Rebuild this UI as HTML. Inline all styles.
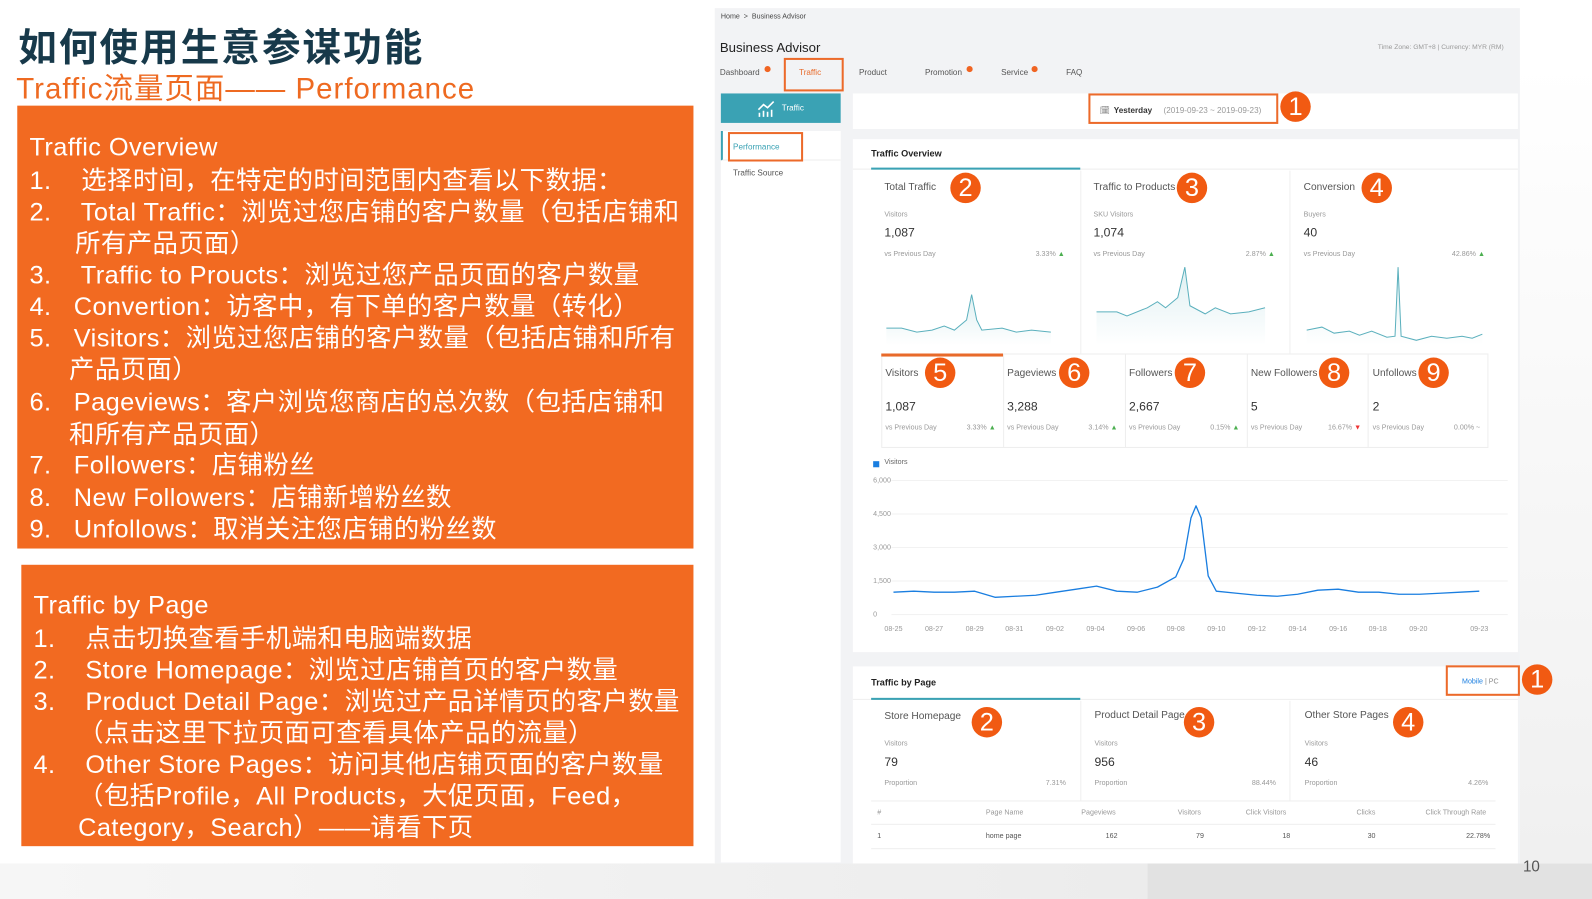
<!DOCTYPE html>
<html><head><meta charset="utf-8"><style>
*{margin:0;padding:0;box-sizing:border-box}
html,body{width:1592px;height:899px;overflow:hidden;background:#fff}
#w{position:absolute;left:0;top:0;width:1568px;height:885px;transform:scale(1.0153,1.0158);transform-origin:0 0;font-family:"Liberation Sans","Noto Sans CJK SC",sans-serif}
.a{position:absolute;white-space:nowrap}
.ob{position:absolute;background:#F26A21;color:#fff}
.ob div{position:absolute;white-space:nowrap;font-size:25px;line-height:28px;letter-spacing:0.4px}
.b{position:absolute;width:30px;height:30px;border-radius:50%;background:#F15A12;color:#fff;font-size:25px;line-height:30px;text-align:center;font-family:"Liberation Sans",sans-serif}
.rb{position:absolute;border:2px solid #EC6A2A}
.card{position:absolute;background:#fff}
.g{color:#999;font-size:7px}
.t{color:#555;font-size:10px}
.n{color:#333;font-size:12px}
</style></head><body><div id="w">
<div class="a" style="left:0;top:850px;width:1130px;height:35px;background:linear-gradient(90deg,#f6f6f6,#ececec)"></div>
<div class="a" style="left:1130px;top:850px;width:438px;height:35px;background:#e2e2e2"></div>
<div class="a" style="left:1497px;top:60px;width:71px;height:790px;background:linear-gradient(180deg,#fff,#f0f0f0)"></div>
<div class="a" style="left:18px;top:16px;font-size:38px;color:#17394a;font-family:'Noto Sans CJK SC',sans-serif;font-weight:bold;letter-spacing:2px">如何使用生意参谋功能</div>
<div class="a" style="left:16px;top:64px;font-size:29px;color:#EE6A21;letter-spacing:1px;font-family:'Liberation Sans','Noto Sans CJK SC',sans-serif">Traffic流量页面—— Performance</div>

<div class="ob" style="left:17px;top:104px;width:666px;height:436px">
<div style="left:12px;top:27px">Traffic Overview</div>
<div style="left:12px;top:60px">1.&nbsp;&nbsp;&nbsp; 选择时间，在特定的时间范围内查看以下数据：</div>
<div style="left:12px;top:91px">2.&nbsp;&nbsp;&nbsp; Total Traffic：浏览过您店铺的客户数量（包括店铺和</div>
<div style="left:57px;top:122px">所有产品页面）</div>
<div style="left:12px;top:153px">3.&nbsp;&nbsp;&nbsp; Traffic to Proucts：浏览过您产品页面的客户数量</div>
<div style="left:12px;top:184px">4.&nbsp;&nbsp; Convertion：访客中，有下单的客户数量（转化）</div>
<div style="left:12px;top:215px">5.&nbsp;&nbsp; Visitors：浏览过您店铺的客户数量（包括店铺和所有</div>
<div style="left:51px;top:246px">产品页面）</div>
<div style="left:12px;top:278px">6.&nbsp;&nbsp; Pageviews：客户浏览您商店的总次数（包括店铺和</div>
<div style="left:51px;top:310px">和所有产品页面）</div>
<div style="left:12px;top:340px">7.&nbsp;&nbsp; Followers：店铺粉丝</div>
<div style="left:12px;top:372px">8.&nbsp;&nbsp; New Followers：店铺新增粉丝数</div>
<div style="left:12px;top:403px">9.&nbsp;&nbsp; Unfollows：取消关注您店铺的粉丝数</div>
</div>

<div class="ob" style="left:21px;top:556px;width:662px;height:277px">
<div style="left:12px;top:26px">Traffic by Page</div>
<div style="left:12px;top:59px">1.&nbsp;&nbsp;&nbsp; 点击切换查看手机端和电脑端数据</div>
<div style="left:12px;top:90px">2.&nbsp;&nbsp;&nbsp; Store Homepage：浏览过店铺首页的客户数量</div>
<div style="left:12px;top:121px">3.&nbsp;&nbsp;&nbsp; Product Detail Page：浏览过产品详情页的客户数量</div>
<div style="left:56px;top:152px">（点击这里下拉页面可查看具体产品的流量）</div>
<div style="left:12px;top:183px">4.&nbsp;&nbsp;&nbsp; Other Store Pages：访问其他店铺页面的客户数量</div>
<div style="left:56px;top:214px">（包括Profile，All Products，大促页面，Feed，</div>
<div style="left:56px;top:245px">Category，Search）——请看下页</div>
</div>

<!-- right screenshot -->
<div class="a" style="left:704px;top:8px;width:793px;height:842px;background:#f2f3f5"></div>
<div class="a" style="left:710px;top:13px;font-size:7px;color:#444">Home &nbsp;&gt;&nbsp; Business Advisor</div>
<div class="a" style="left:709px;top:39px;font-size:13px;color:#222">Business Advisor</div>
<div class="a" style="left:1357px;top:43px;font-size:6.6px;color:#999">Time Zone: GMT+8 | Currency: MYR (RM)</div>
<div class="a t" style="left:709px;top:67px;font-size:8px">Dashboard</div>
<div class="a" style="left:753px;top:65px;width:6px;height:6px;border-radius:50%;background:#F06422"></div>
<div class="a" style="left:787px;top:67px;font-size:8px;color:#E86A2A">Traffic</div>
<div class="rb" style="left:772px;top:57px;width:59px;height:33px"></div>
<div class="a t" style="left:846px;top:67px;font-size:8px">Product</div>
<div class="a t" style="left:911px;top:67px;font-size:8px">Promotion</div>
<div class="a" style="left:952px;top:65px;width:6px;height:6px;border-radius:50%;background:#F06422"></div>
<div class="a t" style="left:986px;top:67px;font-size:8px">Service</div>
<div class="a" style="left:1016px;top:65px;width:6px;height:6px;border-radius:50%;background:#F06422"></div>
<div class="a t" style="left:1050px;top:67px;font-size:8px">FAQ</div>

<div class="a" style="left:710px;top:92px;width:118px;height:29px;background:#3aa2b4"></div>
<svg class="a" style="left:745px;top:98px" width="20" height="18"><path d="M2 10l5-5 4 3 6-6M3 17v-4M7 17v-6M11 17v-5M15 17v-7" stroke="#fff" stroke-width="1.6" fill="none"/></svg>
<div class="a" style="left:770px;top:102px;font-size:8px;color:#fff">Traffic</div>
<div class="a" style="left:710px;top:129px;width:118px;height:720px;background:#fff"></div>
<div class="a" style="left:710px;top:129px;width:118px;height:29px;background:#fff;border-left:2px solid #3aa2b4;border-bottom:1px solid #eee"></div>
<div class="a" style="left:722px;top:140px;font-size:8px;color:#3aa2b4">Performance</div>
<div class="rb" style="left:717px;top:130px;width:74px;height:29px"></div>
<div class="a" style="left:722px;top:166px;font-size:8px;color:#555">Traffic Source</div>

<div class="card" style="left:840px;top:92px;width:655px;height:35px"></div>
<div class="a" style="left:1083px;top:104px;font-size:8px;color:#888">🗓</div>
<div class="a" style="left:1097px;top:104px;font-size:8px;color:#333;font-weight:bold">Yesterday</div>
<div class="a" style="left:1146px;top:104px;font-size:8px;color:#999">(2019-09-23 ~ 2019-09-23)</div>
<div class="rb" style="left:1072px;top:92px;width:187px;height:30px"></div>
<div class="b" style="left:1261px;top:90px">1</div>

<div class="card" style="left:840px;top:137px;width:655px;height:505px"></div>
<div class="a" style="left:858px;top:146px;font-size:9px;color:#222;font-weight:bold">Traffic Overview</div>
<div class="a" style="left:840px;top:166px;width:655px;height:1px;background:#eee"></div>
<div class="a" style="left:858px;top:165px;width:206px;height:2px;background:#3aa2b4"></div>
<div class="a" style="left:1064px;top:168px;width:1px;height:180px;background:#f0f0f0"></div>
<div class="a" style="left:1270px;top:168px;width:1px;height:180px;background:#f0f0f0"></div>

<div class="a t" style="left:871px;top:179px">Total Traffic</div><div class="b" style="left:936px;top:170px">2</div>
<div class="a g" style="left:871px;top:208px">Visitors</div><div class="a n" style="left:871px;top:222px">1,087</div>
<div class="a g" style="left:871px;top:247px">vs Previous Day</div><div class="a g" style="left:1020px;top:247px">3.33% <span style="color:#4caf50">▲</span></div>
<div class="a t" style="left:1077px;top:179px">Traffic to Products</div><div class="b" style="left:1159px;top:170px">3</div>
<div class="a g" style="left:1077px;top:208px">SKU Visitors</div><div class="a n" style="left:1077px;top:222px">1,074</div>
<div class="a g" style="left:1077px;top:247px">vs Previous Day</div><div class="a g" style="left:1227px;top:247px">2.87% <span style="color:#4caf50">▲</span></div>
<div class="a t" style="left:1284px;top:179px">Conversion</div><div class="b" style="left:1341px;top:170px">4</div>
<div class="a g" style="left:1284px;top:208px">Buyers</div><div class="a n" style="left:1284px;top:222px">40</div>
<div class="a g" style="left:1284px;top:247px">vs Previous Day</div><div class="a g" style="left:1430px;top:247px">42.86% <span style="color:#4caf50">▲</span></div>

<svg class="a" style="left:840px;top:255px" width="655" height="90">
<defs><linearGradient id="fg" x1="0" y1="0" x2="0" y2="1"><stop offset="0" stop-color="#dff0f2"/><stop offset="1" stop-color="#fff"/></linearGradient></defs>
<path d="M33 68 l15 0 15 4 15-2 12-4 10 4 12-10 5 -25 5 25 5 10 20-2 14 4 15-2 19 2 V85 H33Z" fill="url(#fg)"/>
<path d="M33 68 l15 0 15 4 15-2 12-4 10 4 12-10 5 -25 5 25 5 10 20-2 14 4 15-2 19 2" stroke="#5bb0bd" fill="none"/>
<path d="M240 52 l20 0 10 4 20-8 10-6 8 6 12-10 7 -30 5 38 15 8 10-6 15 6 18-2 16-4 V85 H240Z" fill="url(#fg)"/>
<path d="M240 52 l20 0 10 4 20-8 10-6 8 6 12-10 7 -30 5 38 15 8 10-6 15 6 18-2 16-4" stroke="#5bb0bd" fill="none"/>
<path d="M447 70 l15-3 12 6 15-2 10 4 12-4 15 6 8-1 3 -68 3 68 15 4 15-4 15 2 15-2 10 2 10-4 V85 H447Z" fill="url(#fg)"/>
<path d="M447 70 l15-3 12 6 15-2 10 4 12-4 15 6 8-1 3 -68 3 68 15 4 15-4 15 2 15-2 10 2 10-4" stroke="#5bb0bd" fill="none"/>
</svg>

<div class="a" style="left:868px;top:348px;width:598px;height:93px;border:1px solid #eee"></div>
<div class="a" style="left:868px;top:348px;width:120px;height:3px;background:#E86A2A"></div>
<div class="a" style="left:988px;top:348px;width:1px;height:93px;background:#eee"></div>
<div class="a" style="left:1108px;top:348px;width:1px;height:93px;background:#eee"></div>
<div class="a" style="left:1228px;top:348px;width:1px;height:93px;background:#eee"></div>
<div class="a" style="left:1347px;top:348px;width:1px;height:93px;background:#eee"></div>

<div class="a t" style="left:872px;top:362px">Visitors</div><div class="b" style="left:911px;top:352px">5</div>
<div class="a n" style="left:872px;top:393px">1,087</div><div class="a g" style="left:872px;top:418px">vs Previous Day</div><div class="a g" style="left:952px;top:418px">3.33% <span style="color:#4caf50">▲</span></div>
<div class="a t" style="left:992px;top:362px">Pageviews</div><div class="b" style="left:1043px;top:352px">6</div>
<div class="a n" style="left:992px;top:393px">3,288</div><div class="a g" style="left:992px;top:418px">vs Previous Day</div><div class="a g" style="left:1072px;top:418px">3.14% <span style="color:#4caf50">▲</span></div>
<div class="a t" style="left:1112px;top:362px">Followers</div><div class="b" style="left:1157px;top:352px">7</div>
<div class="a n" style="left:1112px;top:393px">2,667</div><div class="a g" style="left:1112px;top:418px">vs Previous Day</div><div class="a g" style="left:1192px;top:418px">0.15% <span style="color:#4caf50">▲</span></div>
<div class="a t" style="left:1232px;top:362px">New Followers</div><div class="b" style="left:1299px;top:352px">8</div>
<div class="a n" style="left:1232px;top:393px">5</div><div class="a g" style="left:1232px;top:418px">vs Previous Day</div><div class="a g" style="left:1308px;top:418px">16.67% <span style="color:#e33">▼</span></div>
<div class="a t" style="left:1352px;top:362px">Unfollows</div><div class="b" style="left:1397px;top:352px">9</div>
<div class="a n" style="left:1352px;top:393px">2</div><div class="a g" style="left:1352px;top:418px">vs Previous Day</div><div class="a g" style="left:1432px;top:418px">0.00% ~</div>

<div class="a" style="left:860px;top:454px;width:6px;height:6px;background:#1a7ee0"></div>
<div class="a g" style="left:871px;top:452px;color:#666">Visitors</div>
<svg class="a" style="left:840px;top:460px" width="655" height="170" font-family="Liberation Sans" font-size="7" fill="#999">
<text x="20" y="15">6,000</text><text x="20" y="48">4,500</text><text x="20" y="81">3,000</text><text x="20" y="114">1,500</text><text x="20" y="147">0</text>
<g stroke="#f2f2f2"><line x1="38" y1="13" x2="645" y2="13"/><line x1="38" y1="46" x2="645" y2="46"/><line x1="38" y1="79" x2="645" y2="79"/><line x1="38" y1="112" x2="645" y2="112"/><line x1="38" y1="145" x2="645" y2="145"/></g>
<path d="M40 123 L60 122 L80 123 L100 123 L120 122 L140 128 L160 127 L180 126 L200 123 L220 120 L240 117 L260 122 L280 123 L300 118 L318 108 L326 90 L333 50 L338 38 L343 50 L350 107 L358 122 L378 124 L398 126 L418 127 L438 125 L458 121 L478 120 L498 123 L518 123 L538 125 L558 125 L578 124 L598 123 L617 122" stroke="#1a7ee0" stroke-width="1.3" fill="none" stroke-linejoin="round"/>
<g text-anchor="middle"><text x="40" y="161">08-25</text><text x="80" y="161">08-27</text><text x="120" y="161">08-29</text><text x="159" y="161">08-31</text><text x="199" y="161">09-02</text><text x="239" y="161">09-04</text><text x="279" y="161">09-06</text><text x="318" y="161">09-08</text><text x="358" y="161">09-10</text><text x="398" y="161">09-12</text><text x="438" y="161">09-14</text><text x="478" y="161">09-16</text><text x="517" y="161">09-18</text><text x="557" y="161">09-20</text><text x="617" y="161">09-23</text></g>
</svg>

<div class="card" style="left:840px;top:656px;width:655px;height:194px"></div>
<div class="a" style="left:858px;top:667px;font-size:9px;color:#222;font-weight:bold">Traffic by Page</div>
<div class="a" style="left:840px;top:688px;width:655px;height:1px;background:#eee"></div>
<div class="a" style="left:858px;top:687px;width:206px;height:2px;background:#3aa2b4"></div>
<div class="a" style="left:1440px;top:668px;font-size:7px;color:#1a7ee0">Mobile <span style="color:#888">| PC</span></div>
<div class="rb" style="left:1424px;top:655px;width:73px;height:30px"></div>
<div class="b" style="left:1499px;top:654px">1</div>
<div class="a" style="left:1064px;top:690px;width:1px;height:98px;background:#f0f0f0"></div>
<div class="a" style="left:1270px;top:690px;width:1px;height:98px;background:#f0f0f0"></div>
<div class="a t" style="left:871px;top:700px">Store Homepage</div><div class="b" style="left:957px;top:696px">2</div>
<div class="a g" style="left:871px;top:729px">Visitors</div><div class="a n" style="left:871px;top:743px">79</div>
<div class="a g" style="left:871px;top:768px">Proportion</div><div class="a g" style="left:1030px;top:768px">7.31%</div>
<div class="a t" style="left:1078px;top:699px">Product Detail Page</div><div class="b" style="left:1166px;top:696px">3</div>
<div class="a g" style="left:1078px;top:729px">Visitors</div><div class="a n" style="left:1078px;top:743px">956</div>
<div class="a g" style="left:1078px;top:768px">Proportion</div><div class="a g" style="left:1233px;top:768px">88.44%</div>
<div class="a t" style="left:1285px;top:699px">Other Store Pages</div><div class="b" style="left:1372px;top:696px">4</div>
<div class="a g" style="left:1285px;top:729px">Visitors</div><div class="a n" style="left:1285px;top:743px">46</div>
<div class="a g" style="left:1285px;top:768px">Proportion</div><div class="a g" style="left:1446px;top:768px">4.26%</div>
<div class="a" style="left:858px;top:788px;width:615px;height:1px;background:#eee"></div>
<div class="a g" style="left:864px;top:797px">#</div><div class="a g" style="left:971px;top:797px">Page Name</div><div class="a g" style="left:1065px;top:797px">Pageviews</div><div class="a g" style="left:1160px;top:797px">Visitors</div><div class="a g" style="left:1227px;top:797px">Click Visitors</div><div class="a g" style="left:1336px;top:797px">Clicks</div><div class="a g" style="left:1404px;top:797px">Click Through Rate</div>
<div class="a" style="left:858px;top:811px;width:615px;height:1px;background:#eee"></div>
<div class="a g" style="left:864px;top:820px;color:#555">1</div><div class="a g" style="left:971px;top:820px;color:#555">home page</div><div class="a g" style="left:1089px;top:820px;color:#555">162</div><div class="a g" style="left:1178px;top:820px;color:#555">79</div><div class="a g" style="left:1263px;top:820px;color:#555">18</div><div class="a g" style="left:1347px;top:820px;color:#555">30</div><div class="a g" style="left:1444px;top:820px;color:#555">22.78%</div>
<div class="a" style="left:858px;top:835px;width:615px;height:1px;background:#eee"></div>

<div class="a" style="left:1500px;top:845px;font-size:15px;color:#555">10</div>
</div></body></html>
